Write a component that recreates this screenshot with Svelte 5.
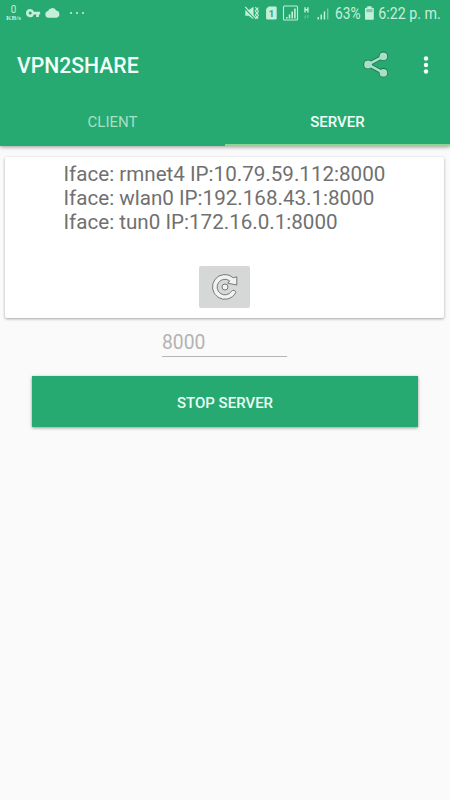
<script>
  let port = '';
  let activeTab = 'SERVER';

  const tabs = ['CLIENT', 'SERVER'];
  const interfaces = [
    { name: 'rmnet4', address: '10.79.59.112:8000' },
    { name: 'wlan0', address: '192.168.43.1:8000' },
    { name: 'tun0', address: '172.16.0.1:8000' }
  ];
</script>

<div class="screen">
  <header>
    <!-- Status bar -->
    <svg class="status" viewBox="0 0 450 27" width="450" height="27">
      <text x="10.8" y="13.3" font-size="10.4" textLength="5.6" lengthAdjust="spacingAndGlyphs">0</text>
      <text class="unit" x="6" y="20" font-size="6" textLength="15" lengthAdjust="spacingAndGlyphs">KB/s</text>

      <!-- VPN key -->
      <path
        fill-rule="evenodd"
        d="M30.2 9a4.1 4.1 0 1 0 3.8 5.5h2.2V17h2.7v-2.5h1.2v-2.8H34A4.1 4.1 0 0 0 30.2 9zm0 2.6a1.5 1.5 0 1 1 0 3 1.5 1.5 0 0 1 0-3z"
      />
      <!-- Cloud -->
      <path d="M48.5 17.8a3.4 3.4 0 0 1-.5-6.7 4.5 4.5 0 0 1 8.2-.6 3.7 3.7 0 0 1 .2 7.3z" />
      <circle cx="71" cy="13" r="1.1" />
      <circle cx="77" cy="13" r="1.1" />
      <circle cx="83" cy="13" r="1.1" />

      <!-- Vibrate / muted -->
      <path d="M245.3 10.3h3.2l5-3.5v12.4l-5-3.5h-3.2z" />
      <path class="line" d="M255.4 7l1.3 2-1.3 2 1.3 2-1.3 2 1.3 2-1.3 2M258.3 7.5l-1 1.7 1 2-1 2 1 2-1 2 .6 1.6" />
      <path class="cut" d="M244.3 7.8l11 11.5" />
      <path class="line" d="M245.3 7l11 11.8" />

      <!-- SIM 1 -->
      <path d="M268.6 6.5h6.9a1.2 1.2 0 0 1 1.2 1.2v10.6a1.2 1.2 0 0 1-1.2 1.2h-8.2a1.2 1.2 0 0 1-1.2-1.2V9z" />
      <text class="sim" x="268.7" y="16.6" font-size="9.5">1</text>

      <!-- Signal, first SIM -->
      <rect class="line" x="283.5" y="6" width="14" height="14" rx="1" />
      <path d="M286 17h1.6v1.5H286zM288.7 14.5h1.6v4h-1.6zM291.4 11.5h1.6v7h-1.6zM294.1 8.5h1.6v10h-1.6z" />

      <!-- H data -->
      <path d="M304.3 7.2h1.4V9h1.5V7.2h1.4v5.3h-1.4v-2h-1.5v2h-1.4z" />
      <path opacity=".4" d="M304.6 15.5h1.2v3h-1.2zM307.3 15h1.2v3h-1.2z" />

      <!-- Signal, second SIM -->
      <path d="M317.5 17h1.5v2.5h-1.5zM320.5 14.5h1.5v5h-1.5zM323.7 11.5h1.5v8h-1.5z" />
      <path opacity=".5" d="M327 8.5h1.4v11H327z" />

      <text x="335" y="19.2" font-size="16.5" textLength="25.5" lengthAdjust="spacingAndGlyphs">63%</text>
      <!-- Battery -->
      <path d="M367.3 6.3h4.2v1.4h1.5a.8.8 0 0 1 .8.8v10.4a.8.8 0 0 1-.8.8h-7.2a.8.8 0 0 1-.8-.8V8.5a.8.8 0 0 1 .8-.8h1.5z" />
      <path class="empty" d="M366.2 9h6.4v3.2h-6.4z" />
      <text x="378.3" y="19.2" font-size="16.5" textLength="62.5" lengthAdjust="spacingAndGlyphs">6:22 p. m.</text>
    </svg>

    <div class="toolbar">
      <h1>VPN2SHARE</h1>
      <button class="icon share" aria-label="Share">
        <svg viewBox="0 0 28 28" width="28" height="28">
          <g class="outline">
            <path d="M20.4 5.3L5 13.5l15.4 8.3" />
            <circle cx="20.4" cy="5.3" r="4.7" />
            <circle cx="5" cy="13.5" r="4.7" />
            <circle cx="20.4" cy="21.8" r="4.7" />
          </g>
          <g class="inner">
            <path d="M20.4 5.3L5 13.5l15.4 8.3" />
            <circle cx="20.4" cy="5.3" r="3.9" />
            <circle cx="5" cy="13.5" r="3.9" />
            <circle cx="20.4" cy="21.8" r="3.9" />
          </g>
        </svg>
      </button>
      <button class="icon more" aria-label="More options">
        <svg viewBox="0 0 6 20" width="6" height="20">
          <circle cx="3" cy="3.5" r="2.2" />
          <circle cx="3" cy="10" r="2.2" />
          <circle cx="3" cy="16.5" r="2.2" />
        </svg>
      </button>
    </div>

    <nav>
      {#each tabs as tab}
        <button class="tab" class:active={tab === activeTab} on:click={() => (activeTab = tab)}>
          {tab}
        </button>
      {/each}
    </nav>
  </header>

  <section class="card">
    <div class="interfaces">
      {#each interfaces as iface}
        <p>Iface: {iface.name} IP:{iface.address}</p>
      {/each}
    </div>
    <button class="refresh" aria-label="Refresh">
      <svg viewBox="0 0 28 28" width="28" height="28">
        <path
          d="M24.8 19.8A12.4 12.4 0 1 1 22.3 4.8L25.8 3.8V12L16.8 10.2 18.6 7.8A7.8 7.8 0 1 0 20.4 18.4 2.4 2.4 0 0 1 24.8 19.8z"
        />
        <circle cx="14" cy="14" r="3" />
      </svg>
    </button>
  </section>

  <input class="port" type="text" placeholder="8000" aria-label="Port" bind:value={port} />
  <button class="stop">STOP SERVER</button>
</div>

<style>
  :global(body) {
    margin: 0;
    background: #fafafa;
  }

  .screen {
    display: flex;
    flex-direction: column;
    align-items: center;
    width: 450px;
    height: 800px;
    overflow: hidden;
    background: #fafafa;
    font-family: Roboto, sans-serif;
  }

  button {
    padding: 0;
    border: 0;
    background: none;
    font-family: inherit;
    cursor: pointer;
  }

  svg {
    display: block;
  }

  header {
    width: 100%;
    height: 146px;
    flex: none;
    background: #27aa71;
    box-shadow: 0 1px 4px rgba(0, 0, 0, 0.4);
  }

  .status {
    fill: #c5efda;
  }

  .status .unit {
    font-family: 'Liberation Serif', serif;
    font-weight: bold;
  }

  .status .sim {
    fill: #27aa71;
    font-weight: 700;
  }

  .status .line {
    fill: none;
    stroke: #c5efda;
    stroke-width: 1.1;
  }

  .status .cut {
    stroke: #27aa71;
    stroke-width: 1.2;
  }

  .status .empty {
    fill: #7dcda8;
  }

  .toolbar {
    display: flex;
    align-items: center;
    height: 75px;
    padding: 0 21px 0 17px;
  }

  h1 {
    flex: 1;
    margin: 2px 0 0;
    color: #f1fffa;
    font-size: 21.2px;
    font-weight: 500;
  }

  .share {
    margin-right: 32px;
  }

  .outline path {
    fill: none;
    stroke: #17704a;
    stroke-width: 4.2;
  }

  .outline circle {
    fill: #17704a;
  }

  .inner path {
    fill: none;
    stroke: #a9dfc6;
    stroke-width: 2.6;
  }

  .inner circle {
    fill: #a9dfc6;
  }

  .more svg {
    fill: #f5fffb;
  }

  nav {
    display: flex;
    height: 44px;
  }

  .tab {
    flex: 1;
    box-sizing: border-box;
    padding-bottom: 3px;
    border-bottom: 2px solid transparent;
    color: #a9dfc4;
    font-size: 15px;
    font-weight: 400;
  }

  .tab.active {
    border-bottom-color: #8cd790;
    color: #effff8;
    font-weight: 500;
  }

  .card {
    display: flex;
    flex-direction: column;
    align-items: center;
    box-sizing: border-box;
    width: 439px;
    height: 161px;
    margin-top: 11px;
    margin-right: 1px;
    padding-top: 6px;
    border-radius: 2px;
    background: #fff;
    box-shadow: 0 1px 3px rgba(0, 0, 0, 0.35);
  }

  .interfaces {
    width: 322px;
    height: 103px;
    color: #707070;
    font-size: 20.6px;
    line-height: 23.8px;
    white-space: nowrap;
  }

  .interfaces p {
    margin: 0;
  }

  .refresh {
    display: flex;
    align-items: center;
    justify-content: center;
    width: 51px;
    height: 42px;
    border-radius: 2px;
    background: #d6d8d7;
  }

  .refresh svg {
    fill: #f1f2f2;
    stroke: #777;
    stroke-width: 1;
  }

  .port {
    box-sizing: border-box;
    width: 125px;
    height: 29px;
    margin: 10px 1px 19px 0;
    padding: 0;
    border: 0;
    border-bottom: 1px solid #b5b5b5;
    outline: none;
    background: none;
    color: #707070;
    font-family: inherit;
    font-size: 19.3px;
  }

  .port::placeholder {
    color: #b3b3b3;
  }

  .stop {
    width: 386px;
    height: 51px;
    padding-top: 2px;
    background: #27aa71;
    box-shadow: 0 1px 3px rgba(0, 0, 0, 0.4);
    color: #e9fff5;
    font-size: 15px;
    font-weight: 500;
  }
</style>
